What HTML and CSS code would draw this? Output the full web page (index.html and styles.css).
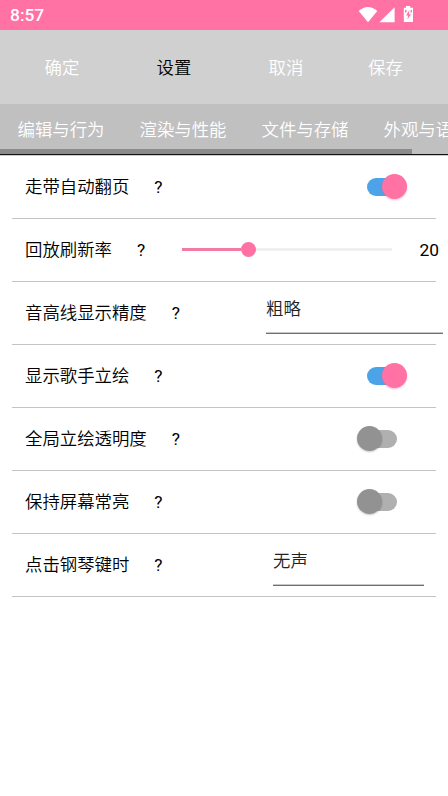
FILE: index.html
```html
<!DOCTYPE html>
<html lang="zh-CN">
<head>
<meta charset="utf-8">
<title>设置</title>
<link rel="stylesheet" href="styles.css">
</head>
<body>
<div class="status">
  <span class="clock">8:57</span>
  <svg class="status-icons" width="56" height="18" viewBox="0 0 56 18" fill="#fff">
    <path d="M0.7 5Q10 -2.8 19.3 5L10 16.2Z"/>
    <path d="M36.6 1.3V16.2H21.4Z"/>
    <path fill-rule="evenodd" d="M48 0H52.2V1.8H55V16H45.8V1.8H48ZM51.4 4L48 9.4H50L49.5 13.4L53 8.2H50.9ZM47 4V6.4H48.5V4ZM52.6 4V6.4H54V4Z"/>
  </svg>
</div>
<header class="toolbar">
  <span class="action">确定</span>
  <span class="action title">设置</span>
  <span class="action">取消</span>
  <span class="action save">保存</span>
</header>
<nav class="tabs">
  <span class="tab">编辑与行为</span>
  <span class="tab">渲染与性能</span>
  <span class="tab">文件与存储</span>
  <span class="tab">外观与语言</span>
</nav>
<div class="scroll"><div class="scroll-thumb"></div></div>
<main class="list">
  <div class="row"><span>走带自动翻页</span><span class="help">?</span><div class="switch on"><i class="knob"></i></div></div>
  <div class="row"><span>回放刷新率</span><span class="help">?</span><div class="slider"><div class="fill"></div><i class="handle"></i><div class="rest"></div></div><span class="value">20</span></div>
  <div class="row"><span>音高线显示精度</span><span class="help">?</span><div class="select precision">粗略</div></div>
  <div class="row"><span>显示歌手立绘</span><span class="help">?</span><div class="switch on"><i class="knob"></i></div></div>
  <div class="row"><span>全局立绘透明度</span><span class="help">?</span><div class="switch"><i class="knob"></i></div></div>
  <div class="row"><span>保持屏幕常亮</span><span class="help">?</span><div class="switch"><i class="knob"></i></div></div>
  <div class="row"><span>点击钢琴键时</span><span class="help">?</span><div class="select sound">无声</div></div>
</main>
</body>
</html>
```

FILE: styles.css
```css
* { box-sizing: border-box; }
body {
  margin: 0;
  height: 796px;
  overflow: hidden;
  background: #fff;
  color: #000;
  font: 17.4px/24px Roboto, "Noto Sans CJK SC", sans-serif;
  font-weight: 350;
}
.status {
  display: flex;
  justify-content: space-between;
  height: 30px;
  padding: 0 34px 0 10px;
  background: #ff72a3;
  color: #fff;
}
.clock { font-size: 17.4px; font-weight: 500; line-height: 31px; }
.status-icons { margin-top: 6px; }
.toolbar {
  display: flex;
  align-items: center;
  height: 74px;
  padding: 2px 0 0 6px;
  background: #d0d0d0;
  color: #fff;
}
.action { width: 112px; text-align: center; }
.title { color: #000; }
.save { width: 87px; }
.tabs {
  display: flex;
  height: 45px;
  padding-top: 14px;
  overflow: hidden;
  background: #c0c0c0;
  color: #fff;
}
.tab { flex: 0 0 122px; padding-left: 17.5px; white-space: nowrap; }
.scroll {
  height: 7px;
  background: #c0c0c0;
  border-bottom: 1px solid #ccc;
  box-shadow: inset 0 -1px #111;
}
.scroll-thumb { width: 412px; height: 5px; background: #8b8b8b; }
.list { padding: 0 12px; }
.row {
  display: flex;
  align-items: center;
  height: 63px;
  padding-left: 13px;
  border-bottom: 1px solid #c4c4c4;
  white-space: nowrap;
}
.help { margin-left: 25px; font-weight: 400; }
.switch {
  display: flex;
  align-items: center;
  width: 30px;
  height: 18px;
  margin: 0 39px 1px auto;
  border-radius: 9px;
  background: #b0b0b0;
}
.knob {
  flex: none;
  width: 25px;
  height: 25px;
  margin-left: -10px;
  border-radius: 50%;
  background: #929292;
  box-shadow: 0 1px 2px rgba(0, 0, 0, .22);
}
.on { background: #4da3e8; }
.on .knob { margin-left: 14.5px; background: #ff72a3; box-shadow: 0 1px 2px rgba(255, 80, 145, .4); }
.slider { display: flex; align-items: center; width: 210px; margin: 0 0 2px auto; }
.fill { width: 59px; height: 3px; background: #f27ba4; }
.handle { width: 15px; height: 15px; border-radius: 50%; background: #ff72a3; }
.rest { flex: 1; height: 3px; background: #f0f0f0; }
.value { margin-left: 27px; margin-right: -3px; font-weight: 400; }
.select { height: 41px; padding-top: 4px; margin-left: auto; border-bottom: 1px solid #6f6f6f; box-shadow: inset 0 -1px #c8c8c8; color: #222; }
.precision { width: 177px; margin-right: -7px; }
.sound { width: 151px; margin-right: 12px; }
```
